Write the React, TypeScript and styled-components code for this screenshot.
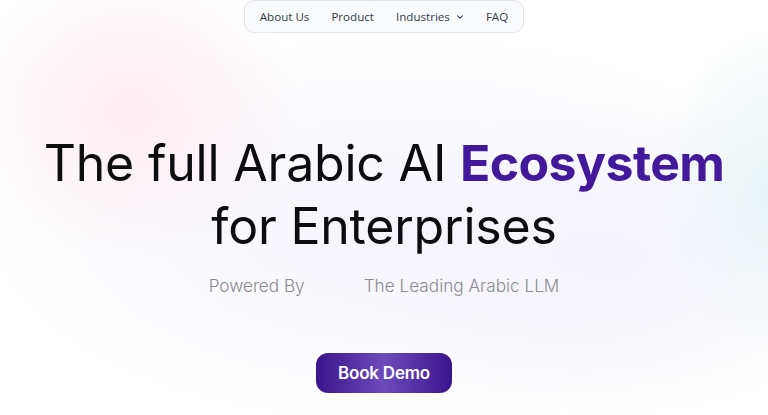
import React from "react";
import styled, { createGlobalStyle } from "styled-components";

const GlobalStyle = createGlobalStyle`
  html, body {
    margin: 0;
    padding: 0;
    background: #ffffff;
  }
  body {
    font-family: "Inter", "Noto Sans", sans-serif;
    overflow: hidden;
  }
`;

const Page = styled.div`
  width: 768px;
  height: 415px;
  position: relative;
  overflow: hidden;
  display: flex;
  flex-direction: column;
  align-items: center;
  background:
    radial-gradient(ellipse 170px 150px at 130px 110px, rgba(252, 228, 236, 0.7), rgba(252, 228, 236, 0) 100%),
    radial-gradient(ellipse 140px 170px at 790px 190px, rgba(228, 242, 244, 0.9), rgba(228, 242, 244, 0) 100%),
    radial-gradient(ellipse 420px 200px at 400px 230px, rgba(243, 241, 252, 0.8), rgba(243, 241, 252, 0) 100%),
    radial-gradient(ellipse 260px 160px at 620px 260px, rgba(240, 240, 252, 0.7), rgba(240, 240, 252, 0) 100%),
    #ffffff;
`;

const Nav = styled.nav`
  height: 31px;
  display: flex;
  align-items: center;
  gap: 22px;
  padding: 0 15px;
  border: 1px solid #e4e6ea;
  border-radius: 10px;
  background: rgba(250, 251, 252, 0.9);
  font-family: "Open Sans", "Noto Sans", sans-serif;
  font-size: 11.6px;
  color: #2f3b4c;
`;

const NavItem = styled.span`
  display: inline-flex;
  align-items: center;
  gap: 6px;
  white-space: nowrap;
`;

const Headline = styled.h1`
  margin: 99px 0 0;
  font-family: "Inter", sans-serif;
  font-weight: 400;
  font-size: 50px;
  line-height: 63px;
  letter-spacing: -0.2px;
  color: #0d0d0f;
  text-align: center;
`;

const Accent = styled.span`
  color: #42199a;
  font-weight: 700;
  letter-spacing: -0.6px;
`;

const Sub = styled.div`
  margin-top: 17px;
  display: flex;
  align-items: center;
  gap: 59px;
  font-family: "Inter", sans-serif;
  font-weight: 300;
  font-size: 17.2px;
  color: #8b8b91;
`;

const Button = styled.button`
  margin-top: 57px;
  width: 136px;
  height: 40px;
  border: none;
  border-radius: 12px;
  background: linear-gradient(90deg, #3b148c 0%, #6c4bbb 50%, #3b148c 100%);
  color: #ffffff;
  font-family: "Inter", sans-serif;
  font-weight: 600;
  font-size: 17px;
  letter-spacing: -0.2px;
  cursor: pointer;
`;

const Chevron = () => (
  <svg width="8" height="8" viewBox="0 0 10 10" fill="none">
    <path d="M2 3.5 L5 6.5 L8 3.5" stroke="#2f3b4c" strokeWidth="1.3" strokeLinecap="round" strokeLinejoin="round" />
  </svg>
);

export default function App() {
  return (
    <>
      <GlobalStyle />
      <Page>
        <Nav>
          <NavItem>About Us</NavItem>
          <NavItem>Product</NavItem>
          <NavItem>
            Industries <Chevron />
          </NavItem>
          <NavItem>FAQ</NavItem>
        </Nav>
        <Headline>
          The full Arabic AI <Accent>Ecosystem</Accent>
          <br />
          for Enterprises
        </Headline>
        <Sub>
          <span>Powered By</span>
          <span>The Leading Arabic LLM</span>
        </Sub>
        <Button>Book Demo</Button>
      </Page>
    </>
  );
}
